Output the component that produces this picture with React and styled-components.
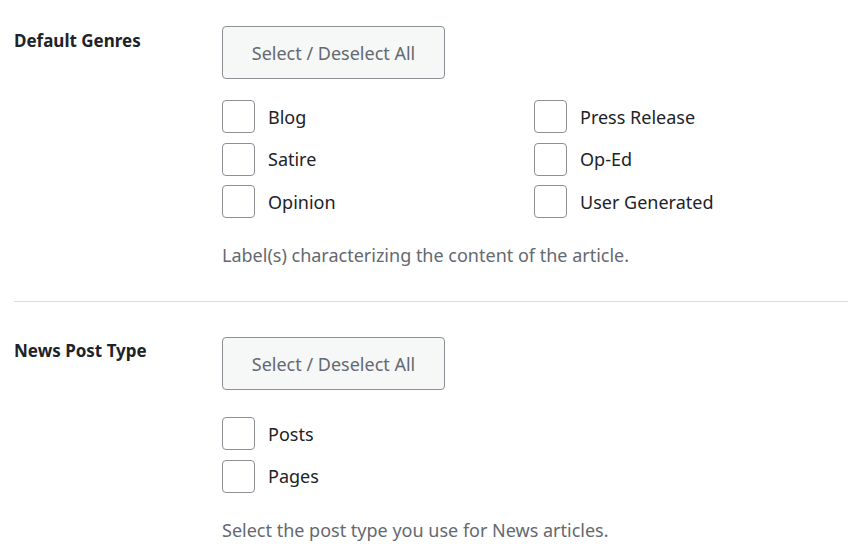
import React from "react";
import styled, { createGlobalStyle } from "styled-components";

const Global = createGlobalStyle`
  html, body { margin: 0; padding: 0; background: #ffffff; }
  body { font-family: "Noto Sans", "Open Sans", sans-serif; color: #1d2327; }
`;

const Page = styled.div`
  padding: 26px 9px 0 14px;
`;

const Section = styled.div`
  display: grid;
  grid-template-columns: 208px 1fr;
  padding: ${(p) => (p.$first ? "0" : "35px")} 0 ${(p) => (p.$last ? "0" : "33px")};
  border-bottom: ${(p) => (p.$last ? "none" : "1px solid #dcdcde")};
`;

const Label = styled.div`
  font-size: 17px;
  font-weight: 700;
  line-height: 24px;
  padding-top: ${(p) => p.$pad}px;
  color: #1d2327;
`;

const Content = styled.div`
  display: flex;
  flex-direction: column;
  align-items: flex-start;
`;

const Button = styled.button`
  box-sizing: border-box;
  width: 223px;
  height: 53px;
  background: #f6f7f7;
  border: 1px solid #8c8f94;
  border-radius: 4px;
  color: #646970;
  font-family: inherit;
  font-size: 18px;
  padding: 0;
  cursor: pointer;
`;

const Options = styled.div`
  display: grid;
  grid-template-columns: ${(p) => (p.$cols === 2 ? "312px 312px" : "312px")};
  grid-auto-flow: column;
  grid-template-rows: repeat(${(p) => p.$rows}, 33px);
  row-gap: 9.5px;
  margin-top: ${(p) => p.$gap}px;
`;

const Option = styled.label`
  display: flex;
  align-items: center;
  gap: 13px;
  font-size: 18px;
  color: #1d2327;
`;

const Box = styled.span`
  box-sizing: border-box;
  width: 33px;
  height: 33px;
  border: 1px solid #8c8f94;
  border-radius: 4px;
  background: #fff;
  flex: none;
`;

const Desc = styled.p`
  margin: 24px 0 0;
  font-size: 18px;
  line-height: 26px;
  color: #646970;
`;

function Field({ label, options, cols, desc, first, last, gap, labelPad }) {
  const rows = Math.ceil(options.length / cols);
  return (
    <Section $first={first} $last={last}>
      <Label $pad={labelPad}>{label}</Label>
      <Content>
        <Button type="button">Select / Deselect All</Button>
        <Options $cols={cols} $rows={rows} $gap={gap}>
          {options.map((o) => (
            <Option key={o}>
              <Box />
              {o}
            </Option>
          ))}
        </Options>
        <Desc>{desc}</Desc>
      </Content>
    </Section>
  );
}

export default function App() {
  return (
    <>
      <Global />
      <Page>
        <Field
          first
          label="Default Genres"
          cols={2}
          gap={21}
          labelPad={3}
          options={["Blog", "Satire", "Opinion", "Press Release", "Op-Ed", "User Generated"]}
          desc="Label(s) characterizing the content of the article."
        />
        <Field
          last
          label="News Post Type"
          cols={1}
          gap={27}
          labelPad={2}
          options={["Posts", "Pages"]}
          desc="Select the post type you use for News articles."
        />
      </Page>
    </>
  );
}
